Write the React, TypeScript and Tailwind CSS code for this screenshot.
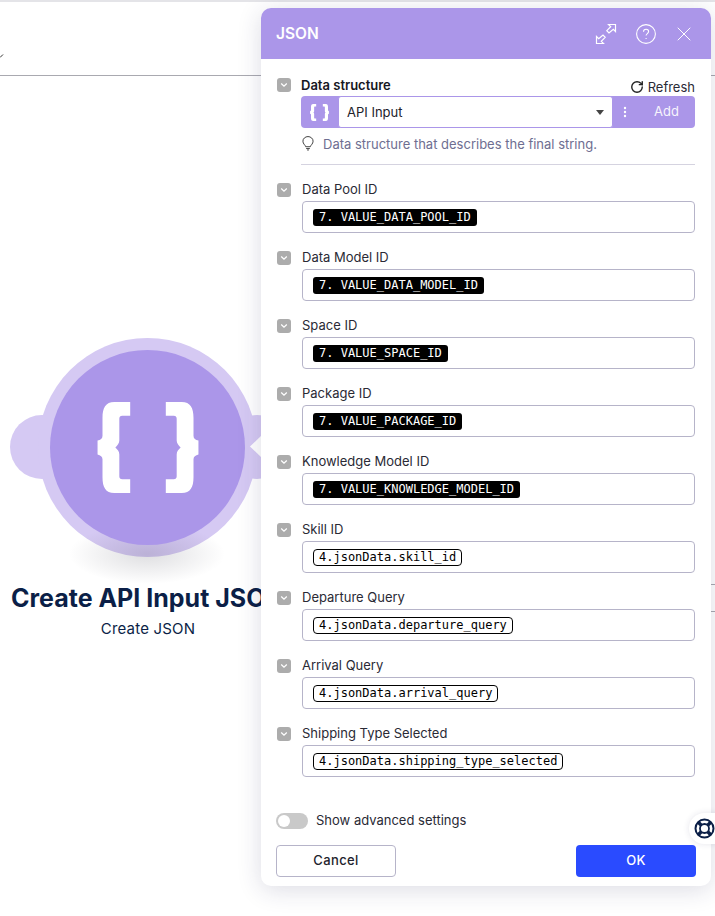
import { RotateCw, X } from "lucide-react";

const rows: { label: string; value: string; dark: boolean }[] = [
  { label: "Data Pool ID", value: "7. VALUE_DATA_POOL_ID", dark: true },
  { label: "Data Model ID", value: "7. VALUE_DATA_MODEL_ID", dark: true },
  { label: "Space ID", value: "7. VALUE_SPACE_ID", dark: true },
  { label: "Package ID", value: "7. VALUE_PACKAGE_ID", dark: true },
  { label: "Knowledge Model ID", value: "7. VALUE_KNOWLEDGE_MODEL_ID", dark: true },
  { label: "Skill ID", value: "4.jsonData.skill_id", dark: false },
  { label: "Departure Query", value: "4.jsonData.departure_query", dark: false },
  { label: "Arrival Query", value: "4.jsonData.arrival_query", dark: false },
  { label: "Shipping Type Selected", value: "4.jsonData.shipping_type_selected", dark: false },
];

function Check() {
  return (
    <span className="flex h-[14px] w-[14px] shrink-0 items-center justify-center rounded-[3px] bg-[#acacac]">
      <svg width="10" height="10" viewBox="0 0 10 10" fill="none" stroke="#fff" strokeWidth="1.3">
        <path d="M2.2 3.6 5 6.2l2.8-2.6" />
      </svg>
    </span>
  );
}

const bracePath =
  "M33 0v14h-8c-2 0-3 1-3 3v22c0 3-2 5-4 7 2 2 4 4 4 7v22c0 2 1 3 3 3h8v14H17C8 92 5 86 5 76V58c0-3-2-4-5-5V39c3-1 5-2 5-5V16C5 6 8 0 17 0z";

function Braces({ className }: { className: string }) {
  return (
    <svg className={className} viewBox="0 0 102 92" fill="#fff">
      <path d={bracePath} />
      <g transform="translate(102,0) scale(-1,1)">
        <path d={bracePath} />
      </g>
    </svg>
  );
}

function Row({ label, value, dark }: { label: string; value: string; dark: boolean }) {
  return (
    <div className="flex h-[68px] gap-[11px] pt-[7px]">
      <div className="pt-[1px]">
        <Check />
      </div>
      <div className="flex flex-1 flex-col">
        <div className="h-[19px] text-[13px] leading-[15px] text-[#2a2a35]">{label}</div>
        <div className="flex h-[32px] items-center rounded-[4px] border border-[#b6b4c9] bg-white px-[10px]">
          <span
            className={
              dark
                ? "rounded-[3px] bg-black px-[6px] font-['DejaVu_Sans_Mono',monospace] text-[12px] leading-[17px] text-white"
                : "rounded-[4px] border border-black px-[5px] font-['DejaVu_Sans_Mono',monospace] text-[12px] leading-[15px] text-black"
            }
          >
            {value}
          </span>
        </div>
      </div>
    </div>
  );
}

export default function App() {
  return (
    <div className="relative h-[916px] w-[715px] overflow-hidden bg-white font-['Inter',sans-serif]">
      {/* canvas lines */}
      <div className="absolute left-0 top-0 h-[2px] w-full bg-[#e4e4e8]" />
      <div className="absolute left-0 top-[75px] h-px w-full bg-[#a9a9b0]" />
      <div className="absolute left-[700px] top-[584px] h-px w-[15px] bg-[#a9a9b0]" />
      <div className="absolute left-[700px] top-[611px] h-px w-[15px] bg-[#a9a9b0]" />
      <svg className="absolute left-0 top-[50px]" width="6" height="10" viewBox="0 0 6 10" fill="none" stroke="#333" strokeWidth="1">
        <path d="M0 7.500 3 4.500" />
      </svg>

      {/* module node */}
      <div className="absolute left-[10px] top-[415px] h-[64px] w-[64px] rounded-full bg-[#d5c9f3]" />
      <div className="absolute left-[225px] top-[415px] h-[64px] w-[64px] rounded-full bg-[#d5c9f3]" />
      <div className="absolute left-[38px] top-[338px] flex h-[219px] w-[219px] items-center justify-center rounded-full bg-[#d5c9f3]">
        <div className="absolute left-[31px] top-[186px] h-[60px] w-[156px] rounded-[50%] bg-[radial-gradient(closest-side,rgba(60,60,75,0.17),transparent)]" />
        <div className="relative flex h-[195px] w-[195px] items-center justify-center rounded-full bg-[#ab96e9]">
          <Braces className="h-[91px] w-[102px]" />
        </div>
      </div>
      <svg className="absolute left-[250px] top-[435px]" width="12" height="23" viewBox="0 0 12 23" fill="#fff">
        <path d="M12 0 0 11.500 12 23z" />
      </svg>
      <div className="absolute left-[11px] top-[583px] whitespace-nowrap text-[25px] font-bold leading-[30px] text-[#0b1f47]">
        Create API Input JSON
      </div>
      <div className="absolute left-[48px] top-[620px] w-[200px] text-center text-[15px] leading-[17px] tracking-[0.2px] text-[#0b1f47]">
        Create JSON
      </div>

      {/* panel */}
      <div className="absolute left-[261px] top-[8px] flex h-[878px] w-[450px] flex-col overflow-hidden rounded-[10px] bg-white shadow-[0_4px_24px_rgba(40,40,90,0.16)]">
        <div className="flex h-[51px] shrink-0 items-center justify-between bg-[#ab96e9] pl-[15px] pr-[18px] text-white">
          <span className="text-[15.5px] font-semibold">JSON</span>
          <div className="flex items-center gap-[19px]">
            <svg width="22" height="22" viewBox="0 0 22 22" fill="none" stroke="#fff" strokeWidth="1.2">
              <path d="M13.500 1.500h7v7l-2.200-2.200-4.300 3.700-2.200-2.300 3.900-4z" />
              <path d="M8.500 20.500h-7v-7l2.200 2.200 4.300-3.700 2.200 2.300-3.900 4z" />
            </svg>
            <svg width="20" height="20" viewBox="0 0 20 20" fill="none" stroke="#fff" strokeWidth="1.1">
              <circle cx="10" cy="10" r="9.400" />
              <path d="M7.500 7.800c0-1.500 1.100-2.500 2.600-2.500s2.500 1 2.500 2.300c0 2-2.500 2-2.500 4" />
              <path d="M10.100 14v1" />
            </svg>
            <X size={24} strokeWidth={1} className="-mx-[3px]" />
          </div>
        </div>
        <div className="flex flex-1 flex-col pl-[16px] pr-[16px]">
          <div className="flex pt-[18px]">
            <div className="pt-[1px]">
              <Check />
            </div>
            <div className="ml-[10px] flex flex-1 flex-col">
              <div className="flex h-[19px] justify-between">
                <span className="text-[13px] font-semibold leading-[17px] text-[#17171f]">Data structure</span>
                <span className="flex items-center gap-[4px] pt-[1px] text-[13px] leading-[15px] text-[#2a2a35]">
                  <RotateCw size={14} strokeWidth={2.4} className="text-[#222]" />
                  Refresh
                </span>
              </div>
              <div className="flex h-[32px] rounded-[4px] bg-[#ab96e9]">
                <div className="flex w-[37px] items-center justify-center">
                  <Braces className="h-[17px] w-[19px]" />
                </div>
                <div className="flex flex-1 items-center justify-between rounded-[3px] border border-[#ab96e9] bg-white pl-[8px] pr-[8px] pt-[1px] text-[13px] text-[#22222c]">
                  API Input
                  <span className="h-0 w-0 border-x-[4px] border-t-[5px] border-x-transparent border-t-[#444]" />
                </div>
                <div className="flex w-[82px] items-center text-[13px] text-white">
                  <svg className="ml-[10px]" width="4" height="12" viewBox="0 0 4 12" fill="#fff">
                    <circle cx="2" cy="2" r="1.200" />
                    <circle cx="2" cy="6" r="1.200" />
                    <circle cx="2" cy="10" r="1.200" />
                  </svg>
                  <span className="ml-[27px] opacity-90">Add</span>
                </div>
              </div>
              <div className="flex h-[36px] items-center gap-[9px] pb-[3px] text-[13px] text-[#6e6e91]">
                <svg className="mb-[3px] ml-[1px]" width="12" height="15" viewBox="0 0 13 16" fill="none" stroke="#333" strokeWidth="1">
                  <path d="M4 11.500C3.500 9.500 1 8.500 1 5.500a5.500 5 0 0 1 11 0c0 3-2.500 4-3 6z" />
                  <path d="M4.500 13.500h4M5.500 15h2" />
                </svg>
                Data structure that describes the final string.
              </div>
              <div className="h-px bg-[#d5d3e0]" />
            </div>
          </div>
          <div className="pt-[10px]">
            {rows.map((r) => (
              <Row key={r.label} {...r} />
            ))}
          </div>
          <div className="ml-[-1px] mt-[24px] flex items-center gap-[8px]">
            <span className="flex h-[16px] w-[32px] items-center rounded-full bg-[#c9c9c9] pl-[2px]">
              <span className="h-[12px] w-[12px] rounded-full bg-white" />
            </span>
            <span className="text-[13px] text-[#2a2a35]">Show advanced settings</span>
          </div>
          <div className="ml-[-1px] mr-[-1px] mt-[14px] flex justify-between">
            <button className="h-[32px] w-[120px] rounded-[4px] border border-[#b6b4c9] bg-white text-[13px] font-medium tracking-[0.4px] text-[#22222c]">
              Cancel
            </button>
            <button className="h-[32px] w-[120px] rounded-[4px] bg-[#2a4bff] text-[13px] font-medium tracking-[0.4px] text-white">
              OK
            </button>
          </div>
        </div>
      </div>

      {/* help bubble */}
      <div className="absolute left-[689px] top-[813px] flex h-[31px] w-[40px] items-center rounded-l-full bg-white pl-[5px] shadow-[0_0_6px_rgba(40,40,90,0.12)]">
        <svg width="21" height="21" viewBox="0 0 21 21" fill="none" stroke="#0b1f47">
          <circle cx="10.500" cy="10.500" r="9" strokeWidth="2" />
          <circle cx="10.500" cy="10.500" r="4.500" strokeWidth="1.800" />
          <path d="M4 4l3.300 3.300M17 4l-3.300 3.300M4 17l3.300-3.300M17 17l-3.300-3.300" strokeWidth="3.400" />
        </svg>
      </div>
    </div>
  );
}
